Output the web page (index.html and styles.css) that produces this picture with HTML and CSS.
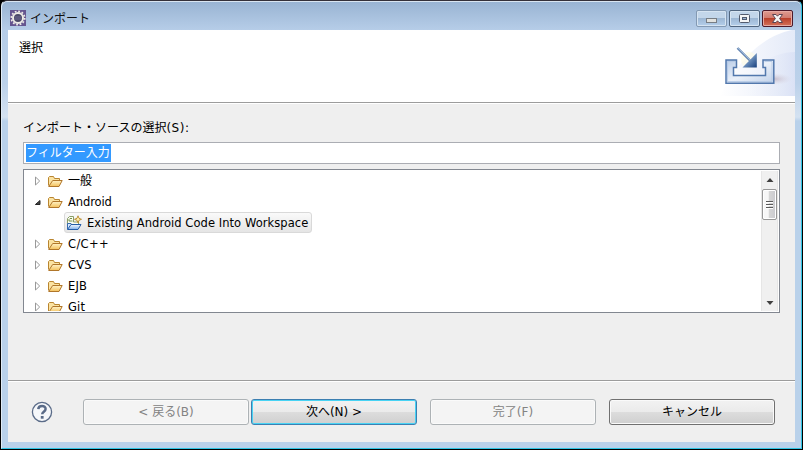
FILE: index.html
```
<!DOCTYPE html>
<html lang="ja">
<head>
<meta charset="utf-8">
<title>インポート</title>
<link rel="stylesheet" href="styles.css">
</head>
<body>
<svg class="defs" width="0" height="0">
  <defs>
    <linearGradient id="gold" x1="0" y1="0" x2="0" y2="1"><stop offset="0" stop-color="#fff3c8"/><stop offset="1" stop-color="#f3c05a"/></linearGradient>
    <linearGradient id="blue" x1="0" y1="0" x2="0" y2="1"><stop offset="0" stop-color="#f4faff"/><stop offset="1" stop-color="#7fb0ec"/></linearGradient>
    <symbol id="folder" viewBox="0 0 16 16">
      <path d="M1.5 12.5V4.5L2.5 3.5H6.5L7.5 5.5H12.5V8" fill="#fbe3a2" stroke="#b98530"/>
      <path d="M1.7 13.5L5.7 7.5H15.2L12 13.5Z" fill="url(#gold)" stroke="#b0762a"/>
    </symbol>
    <symbol id="closed" viewBox="0 0 8 10"><path d="M1.5 1V9L5.7 5Z" fill="#fff" stroke="#999"/></symbol>
    <symbol id="open" viewBox="0 0 8 10"><path d="M6 3.5V7.5H1.4Z" fill="#454545" stroke="#262626"/></symbol>
  </defs>
</svg>
<div class="window">
  <header class="titlebar">
    <svg class="app-icon" width="16" height="16" viewBox="0 0 16 16">
      <rect width="16" height="16" fill="#65558f"/>
      <circle cx="8" cy="8" r="5" fill="#4c4968" stroke="#eeece6" stroke-width="2"/>
      <circle cx="8" cy="8" r="6.7" fill="none" stroke="#eeece6" stroke-width="1.7" stroke-dasharray="1.8 1.708"/>
      <path d="M5 7H11M4.5 9H11.5" stroke="#7774a0" stroke-width=".8"/>
    </svg>
    <h1 class="title">インポート</h1>
    <div class="controls">
      <span class="control control-min"><svg width="31" height="17"><rect x="10.5" y="8.5" width="10" height="4" fill="#e2e2df" stroke="#777d84"/></svg></span>
      <span class="control"><svg width="31" height="17"><rect x="10.5" y="4.5" width="10" height="8" rx="1" fill="#f5f5f5" stroke="#535b6d"/><rect x="13.5" y="7.5" width="4" height="2" fill="#9bb5d3" stroke="#535b6d"/></svg></span>
      <span class="control control-close"><svg width="31" height="17"><path d="M10.5 4.5H14L15.5 6.2L17 4.5H20.5L17.6 8.5L20.5 12.5H17L15.5 10.8L14 12.5H10.5L13.4 8.5Z" fill="#f6f6f6" stroke="#5c4452"/></svg></span>
    </div>
  </header>
  <main class="client">
    <section class="banner">
      <h2 class="heading">選択</h2>
      <svg class="banner-art" width="75" height="66" viewBox="720 30 75 66">
        <defs>
          <linearGradient id="sweep"><stop offset="0" stop-color="#fff"/><stop offset="1" stop-color="#e4eaf8"/></linearGradient>
          <linearGradient id="sweep2"><stop offset="0" stop-color="#fafbfe" stop-opacity="0"/><stop offset="1" stop-color="#d6def4"/></linearGradient>
          <linearGradient id="tray" x1="0" y1="0" x2="1" y2="1"><stop offset="0" stop-color="#bacde8"/><stop offset=".5" stop-color="#eaf0f9"/><stop offset="1" stop-color="#c0d1ea"/></linearGradient>
          <linearGradient id="head" x1="0" y1="0" x2="1" y2="1"><stop offset="0" stop-color="#cfe1f3"/><stop offset=".6" stop-color="#5a7fb0"/><stop offset="1" stop-color="#173f7d"/></linearGradient>
          <radialGradient id="shade"><stop offset="0" stop-color="#b9a9b7" stop-opacity=".7"/><stop offset="1" stop-color="#d8d3e0" stop-opacity="0"/></radialGradient>
        </defs>
        <path d="M720 96C737 62 762 36 792 30H795V96Z" fill="url(#sweep)"/>
        <path d="M738 96C748 70 770 52 795 52V96Z" fill="url(#sweep2)" opacity=".7"/>
        <ellipse cx="774" cy="79" rx="18" ry="6" fill="url(#shade)"/>
        <circle cx="749" cy="60" r="8" fill="#fffbe2" opacity=".6"/>
        <path d="M726 60H736.5V67.5H733.5V75.5H765.5V67.5H763V60H773.8V83.2H726Z" fill="url(#tray)" stroke="#5278ad" stroke-width="1.5"/>
        <path d="M727.5 82V61.5H735M764.5 61.5H772V81.5H727.5" fill="none" stroke="#b3c8e5" stroke-width=".8"/>
        <path d="M737.5 48L750 60.5" stroke="#6787b4" stroke-width="2.4"/>
        <path d="M738 48L751 61" stroke="#a9c5df" stroke-width=".8"/>
        <path d="M756.8 53V67.5H742.5Z" fill="url(#head)"/>
      </svg>
    </section>
    <section class="content">
      <label class="label" for="filter">インポート・ソースの選択<span class="label-key">(S):</span></label>
      <div class="filter" id="filter"><span class="selected-text">フィルター入力</span></div>
      <div class="tree">
        <ul class="items">
          <li class="item"><svg class="twisty"><use href="#closed"/></svg><svg class="folder"><use href="#folder"/></svg><span>一般</span></li>
          <li class="item"><svg class="twisty"><use href="#open"/></svg><svg class="folder"><use href="#folder"/></svg><span class="latin">Android</span></li>
          <li class="item item-child"><div class="chosen">
            <svg width="16" height="16" viewBox="0 0 16 16">
              <path d="M1.5 12V3.5L3.5 1.5H7.5V7H12.5V9" fill="#fafcf0" stroke="#8b9e68"/>
              <path d="M6 3.5H4L3 4.5V6H6.5" fill="none" stroke="#71914b"/>
              <path d="M12 .8L13 3.3L15.5 4.3L13 5.3L12 7.8L11 5.3L8.5 4.3L11 3.3Z" fill="#fff0aa" stroke="#b9892c" stroke-width=".9"/>
              <path d="M1.5 14V8.5H5L6 9.5H11" fill="#d9e9ff" stroke="#386bad"/>
              <path d="M1.5 14.5L5 9.5H15L12 14.5Z" fill="url(#blue)" stroke="#245da8"/>
            </svg>
            <span class="latin chosen-text">Existing Android Code Into Workspace</span></div></li>
          <li class="item"><svg class="twisty"><use href="#closed"/></svg><svg class="folder"><use href="#folder"/></svg><span class="latin cpp">C/C++</span></li>
          <li class="item"><svg class="twisty"><use href="#closed"/></svg><svg class="folder"><use href="#folder"/></svg><span class="latin caps">CVS</span></li>
          <li class="item"><svg class="twisty"><use href="#closed"/></svg><svg class="folder"><use href="#folder"/></svg><span class="latin caps">EJB</span></li>
          <li class="item"><svg class="twisty"><use href="#closed"/></svg><svg class="folder"><use href="#folder"/></svg><span class="latin caps">Git</span></li>
        </ul>
        <div class="scrollbar">
          <svg class="arrow" width="16" height="18"><path d="M4.5 11H11.5L8 7Z" fill="#404040"/></svg>
          <div class="thumb"><svg width="9" height="9"><path d="M0 1.5H7M0 4.5H7M0 7.5H7" stroke="#5a5a5a"/><path d="M0 2.5H7M0 5.5H7M0 8.5H7" stroke="#fff"/></svg></div>
          <svg class="arrow arrow-down" width="16" height="18"><path d="M4.5 8H11.5L8 12Z" fill="#404040"/></svg>
        </div>
      </div>
    </section>
    <footer class="footer">
      <svg class="help" width="22" height="22" viewBox="0 0 22 22"><circle cx="11" cy="11" r="9.6" fill="#f5f7fa" stroke="#5a6b88" stroke-width="1.3"/><path d="M7.3 8.1C7.5 3.8 14.8 3.9 14.6 8C14.5 10.7 11.2 10.8 11.2 13.3" fill="none" stroke="#5a6b88" stroke-width="2.5"/><rect x="9.8" y="15" width="2.8" height="2.7" fill="#5a6b88"/></svg>
      <button class="button back" disabled>&lt; 戻る(B)</button>
      <button class="button next">次へ(N) &gt;</button>
      <button class="button finish" disabled>完了(F)</button>
      <button class="button cancel">キャンセル</button>
    </footer>
  </main>
</div>
</body>
</html>
```
FILE: styles.css
```
* { box-sizing: border-box; }
body {
  margin: 0;
  width: 803px;
  height: 450px;
  overflow: hidden;
  background: #000;
  color: #000;
  font: 12px/18px "DejaVu Sans", "Noto Sans CJK JP", sans-serif;
}
svg { display: block; flex: none; }
.defs { position: absolute; }
h1, h2, ul { margin: 0; padding: 0; font-size: 12px; font-weight: 400; list-style: none; }
.window {
  height: 449px;
  margin: 0 1px;
  padding: 0 6px 6px;
  border: 1px solid #2ec4e4;
  border-top-color: #343039;
  border-left-color: #e0ebf5;
  border-radius: 6px 6px 0 0;
  background: linear-gradient(#98b3d2 0, #b6cde8 29px, #bbd1ea 82px, #d4e2f1 116px, #b9d1ea 120px, #b9d1ea);
  box-shadow: inset 0 1px #d9e5f1;
}
.titlebar { height: 29px; display: flex; padding: 9px 1px 0 2px; }
.title { margin: 0 0 0 4px; height: 18px; color: #101010; }
.controls { display: flex; gap: 2px; margin: 0 1px 0 auto; }
.control {
  width: 31px;
  height: 17px;
  border: 1px solid #50657f;
  border-radius: 2px;
  box-shadow: inset 0 0 0 1px #d6e4f2;
  background: linear-gradient(#c3d6ea 0 45%, #9bb5d2 46%, #b5cfeb);
}
.control svg { margin: -1px; }
.control-min { border-color: #8399b3; }
.control-close {
  border-color: #4d1929;
  box-shadow: inset 0 0 0 1px #e6aaa3;
  background: linear-gradient(#df9c91 0, #d27c70 45%, #b83d28 46%, #d4725b);
}
.client { height: 412px; background: #efefef; display: flex; flex-direction: column; }
.banner {
  height: 73px;
  display: flex;
  justify-content: space-between;
  background: #fff;
  border-bottom: 1px solid #9c9c9c;
}
.heading { padding: 9px 0 0 11px; }
.content { height: 277px; padding: 15px 15px 0; border-top: 1px solid #fff; }
.label { display: block; height: 23px; }
.label-key { letter-spacing: .5px; }
.filter { height: 22px; padding: 1px 2px; border: 1px solid #abadb3; background: #fff; }
.selected-text { display: block; width: 85px; height: 18px; color: #fff; background: #3399ff; }
.tree {
  height: 144px;
  margin-top: 5px;
  padding: 1px;
  display: flex;
  border: 1px solid #828790;
  background: #fff;
  overflow: hidden;
}
.items { flex: 1; height: 141px; margin-top: -1px; overflow: hidden; }
.item { display: flex; align-items: center; height: 21px; padding-left: 9px; white-space: nowrap; }
.twisty { width: 8px; height: 10px; margin-right: 5px; }
.folder { width: 16px; height: 16px; margin-right: 5px; }
.latin { font-size: 11.5px; letter-spacing: -.1px; }
.cpp { letter-spacing: .35px; }
.caps { letter-spacing: .15px; }
.item-child { padding-left: 39px; }
.chosen {
  width: 248px;
  height: 21px;
  padding-left: 1px;
  display: flex;
  align-items: center;
  gap: 5px;
  border: 1px solid #d9d9d9;
  border-radius: 3px;
  background: linear-gradient(#fafafa, #e5e5e5);
}
.chosen-text { letter-spacing: .06px; }
.scrollbar { width: 17px; border: solid #e6e6e6; border-width: 0 1px; background: #f0f0f0; }
.arrow { height: 18px; }
.thumb {
  width: 15px;
  height: 31px;
  display: flex;
  align-items: center;
  padding-left: 3px;
  border: 1px solid #979797;
  border-radius: 2px;
  background: linear-gradient(90deg, #f7f7f7 40%, #d5d5d5 50%, #cacacf);
  box-shadow: inset 0 0 0 1px #fff;
}
.arrow-down { margin-top: 73px; }
.footer {
  flex: 1;
  display: flex;
  align-items: flex-start;
  padding: 18px 20px 0 23px;
  border-top: 1px solid #9c9c9c;
  box-shadow: inset 0 1px #fff;
}
.help { margin: 2px 30px 0 0; }
.button {
  width: 166px;
  height: 26px;
  padding: 0 0 1px;
  border: 1px solid #707070;
  border-radius: 3px;
  box-shadow: inset 0 0 0 1px #fafafa;
  background: linear-gradient(#f2f2f2 0, #ebebeb 48%, #dddddd 49%, #cfcfcf);
  color: #000;
  font: inherit;
}
.button:disabled { border-color: #adb2b5; background: #f4f4f4; color: #838383; }
.next { margin: 0 13px 0 2px; border-color: #3c7fb1; box-shadow: inset 0 0 0 1px #48d3f4; }
.cancel { margin-left: 13px; }
```
